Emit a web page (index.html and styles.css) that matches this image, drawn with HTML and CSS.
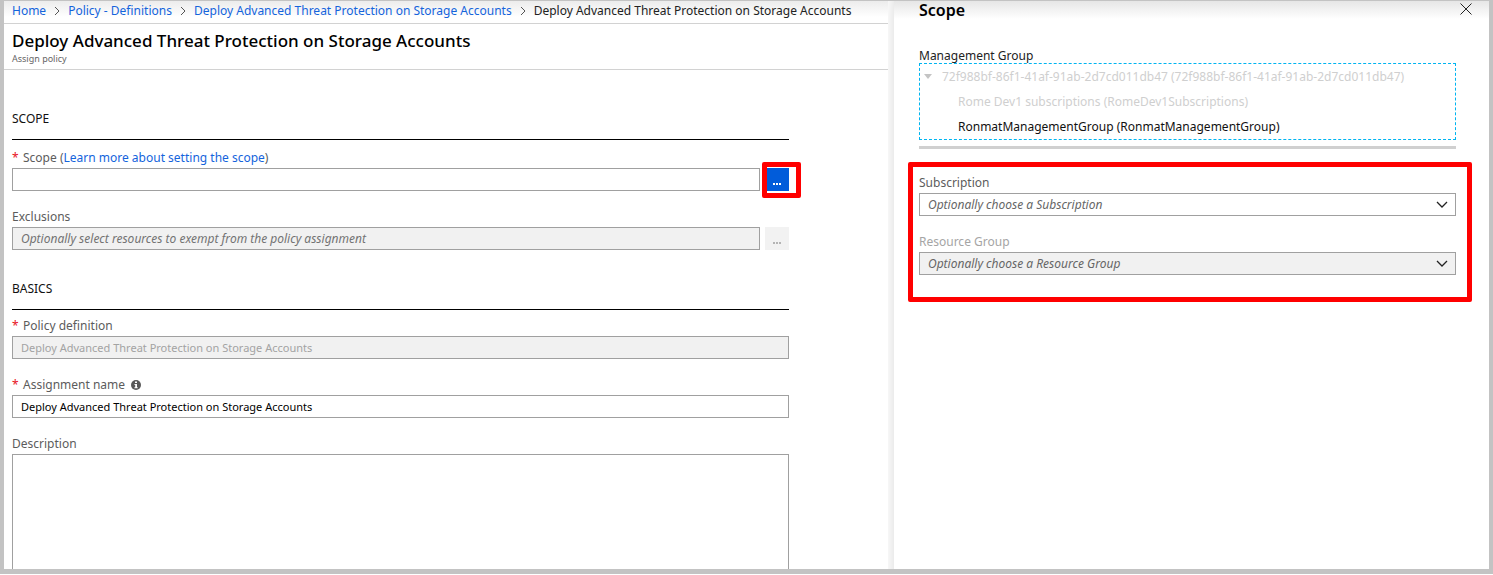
FILE: index.html
```html
<!DOCTYPE html>
<html lang="en">
<head>
<meta charset="utf-8">
<title>Deploy Advanced Threat Protection on Storage Accounts</title>
<link rel="stylesheet" href="styles.css">
</head>
<body>
<div class="frame">
  <main class="blade">
    <nav class="crumbs" aria-label="Breadcrumb">
      <a href="#">Home</a>
      <svg class="sep" viewBox="0 0 6 10"><path d="M1 1l4 4-4 4"/></svg>
      <a href="#">Policy - Definitions</a>
      <svg class="sep" viewBox="0 0 6 10"><path d="M1 1l4 4-4 4"/></svg>
      <a href="#">Deploy Advanced Threat Protection on Storage Accounts</a>
      <svg class="sep" viewBox="0 0 6 10"><path d="M1 1l4 4-4 4"/></svg>
      <span>Deploy Advanced Threat Protection on Storage Accounts</span>
    </nav>
    <header class="blade-header">
      <h1>Deploy Advanced Threat Protection on Storage Accounts</h1>
      <p>Assign policy</p>
    </header>
    <form class="form">
      <section class="section">
        <h2>SCOPE</h2>
        <div class="fields">
          <div class="field">
            <div class="label"><span class="req">*</span><label for="scope">Scope</label>&nbsp;(<a href="#">Learn more about setting the scope</a>)</div>
            <div class="picker">
              <input id="scope" class="box" type="text">
              <div class="marked">
                <button type="button" class="more primary" aria-label="Choose scope"><svg viewBox="0 0 8 2"><path d="M0 0h2v2H0zM3 0h2v2H3zM6 0h2v2H6z"/></svg></button>
                <span class="mark mark-button"></span>
              </div>
            </div>
          </div>
          <div class="field">
            <label class="label" for="exclusions">Exclusions</label>
            <div class="picker">
              <input id="exclusions" class="box" type="text" placeholder="Optionally select resources to exempt from the policy assignment" disabled>
              <button type="button" class="more" aria-label="Choose exclusions" disabled><svg viewBox="0 0 8 2"><path d="M0 0h2v2H0zM3 0h2v2H3zM6 0h2v2H6z"/></svg></button>
            </div>
          </div>
        </div>
      </section>
      <section class="section">
        <h2>BASICS</h2>
        <div class="fields compact">
          <div class="field">
            <label class="label" for="definition"><span class="req">*</span>Policy definition</label>
            <input id="definition" class="box" type="text" value="Deploy Advanced Threat Protection on Storage Accounts" disabled>
          </div>
          <div class="field">
            <label class="label" for="name"><span class="req">*</span>Assignment name
              <svg class="info" viewBox="0 0 10 10"><circle cx="5" cy="5" r="5"/><path d="M4 1.5h2v1.5H4zM3.5 4H6v3.2h.7v1H3.4v-1h.8V5h-.7z"/></svg>
            </label>
            <input id="name" class="box" type="text" value="Deploy Advanced Threat Protection on Storage Accounts">
          </div>
          <div class="field">
            <label class="label" for="description">Description</label>
            <textarea id="description" class="box area"></textarea>
          </div>
        </div>
      </section>
    </form>
  </main>
  <aside class="panel">
    <header class="panel-header">
      <h2>Scope</h2>
      <button type="button" class="close" aria-label="Close"><svg viewBox="0 0 12 12"><path d="M.5.5l11 11M11.5.5l-11 11"/></svg></button>
    </header>
    <div class="panel-body">
      <h3 id="groups">Management Group</h3>
      <ul class="tree" aria-labelledby="groups">
        <li class="root"><svg class="caret" viewBox="0 0 8 5"><path d="M0 0h8L4 5z"/></svg>72f988bf-86f1-41af-91ab-2d7cd011db47 (72f988bf-86f1-41af-91ab-2d7cd011db47)</li>
        <li class="child">Rome Dev1 subscriptions (RomeDev1Subscriptions)</li>
        <li class="child active">RonmatManagementGroup (RonmatManagementGroup)</li>
      </ul>
      <div class="fields choices">
        <div class="field">
          <label class="label" for="subscription">Subscription</label>
          <div class="drop">
            <select id="subscription" class="box"><option>Optionally choose a Subscription</option></select>
            <svg class="chevron" viewBox="0 0 12 7"><path d="M1 1l5 5 5-5"/></svg>
          </div>
        </div>
        <div class="field">
          <label class="label muted" for="group">Resource Group</label>
          <div class="drop">
            <select id="group" class="box" disabled><option>Optionally choose a Resource Group</option></select>
            <svg class="chevron" viewBox="0 0 12 7"><path d="M1 1l5 5 5-5"/></svg>
          </div>
        </div>
        <span class="mark mark-choices"></span>
      </div>
    </div>
  </aside>
</div>
</body>
</html>
```
FILE: styles.css
```css
* { box-sizing: border-box; }
html, body { height: 100%; }
body {
  margin: 0;
  padding-bottom: 1px;
  overflow: hidden;
  background: #fff;
  color: #222;
  font-family: "Noto Sans", "Open Sans", sans-serif;
  font-size: 12px;
}
h1, h2, h3, p, ul { margin: 0; padding: 0; }
ul { list-style: none; }
a { color: #1464dc; text-decoration: none; }
button { padding: 0; border: 0; font: inherit; }
svg { display: block; flex: none; }

.frame {
  display: grid;
  grid-template-columns: minmax(0, 1fr) minmax(0, 601px);
  height: 100%;
  overflow: hidden;
  border: solid #c3c3c3;
  border-width: 1px 4px 5px;
}
.blade { min-width: 0; overflow: hidden; }

.crumbs {
  display: flex;
  align-items: center;
  gap: 8px;
  height: 23px;
  padding: 0 8px 3px;
  border-bottom: 1px solid #d2d2d2;
  background: linear-gradient(#ececec, #fff 16px);
  font-size: 12px;
  white-space: nowrap;
}
.sep { width: 6px; height: 10px; fill: none; stroke: #555; }

.blade-header {
  height: 46px;
  padding: 5px 8px 0;
  border-bottom: 1px solid #d2d2d2;
}
.blade-header h1 { color: #000; font-size: 17px; font-weight: 500; line-height: 24px; }
.blade-header p { color: #666; font-size: 9px; line-height: 12px; }

.form { max-width: 785px; padding: 10px 0 0 8px; }
.section { padding-top: 29px; }
.section h2 {
  padding-bottom: 10px;
  border-bottom: 1px solid #000;
  color: #111;
  font-size: 12px;
  font-weight: 400;
  line-height: 20px;
}
.fields { display: grid; gap: 14px; padding-top: 6px; }
.compact { padding-top: 4px; }
.field { min-width: 0; }
.label {
  display: flex;
  align-items: center;
  height: 22px;
  color: #5c5c5c;
  font-size: 12px;
  white-space: nowrap;
}
.muted { color: #a5a5a5; }
.req { width: 11px; color: #e81123; }
.info { width: 10px; height: 10px; margin: 2px 0 0 6px; fill: #595959; }
.info path { fill: #fff; }

.box {
  display: block;
  width: 100%;
  height: 23px;
  margin: 0;
  padding: 0 8px;
  border: 1px solid #a0a0a0;
  border-radius: 0;
  outline: 0;
  background: #fff;
  color: #000;
  font-family: inherit;
  font-size: 11px;
}
.box:disabled { background: #f1f1f1; color: #a3a3a3; opacity: 1; }
.box:placeholder-shown { font-size: 12px; }
.box::placeholder { color: #737373; font-style: italic; opacity: 1; }
.area { height: 140px; resize: none; }

.picker { display: grid; grid-template-columns: minmax(0, 1fr) 24px; gap: 5px; }
.marked { position: relative; }
.more {
  display: flex;
  align-items: flex-end;
  justify-content: center;
  width: 24px;
  height: 23px;
  padding-bottom: 6px;
  background: #f2f2f2;
}
.more svg { width: 8px; height: 2px; fill: #b4b4b4; }
.primary { background: #015cda; }
.primary svg { fill: #fff; }
.mark {
  position: absolute;
  border: 5px solid #f00;
  border-radius: 2px;
  pointer-events: none;
}
.mark-button { inset: -6px -12px -7px -3px; }
.mark-choices { inset: 13px -16px -27px -11px; }

.panel {
  display: grid;
  grid-template-columns: 6px minmax(0, 1fr);
  grid-template-rows: auto 1fr;
  min-width: 0;
  background: linear-gradient(90deg, #f7f7f7, #ebebeb) 0 0 / 6px 100% no-repeat;
}
.panel > * { grid-column: 2; }
.panel-header {
  display: flex;
  justify-content: space-between;
  align-items: flex-start;
  height: 47px;
  padding: 0 17px 0 25px;
  background: linear-gradient(#e6e6e6, #fff 18px);
}
.panel-header h2 { color: #000; font-size: 16px; font-weight: 600; line-height: 18px; }
.close { margin-top: 2px; background: none; }
.close svg { width: 12px; height: 12px; fill: none; stroke: #222; }
.panel-body { padding: 0 33px 0 25px; }
.panel-body h3 { color: #222; font-size: 12px; font-weight: 400; line-height: 15px; }
.tree {
  border: 1px dashed #00b4f0;
  color: #cfcfcf;
  line-height: 25px;
  white-space: nowrap;
  overflow: hidden;
}
.root { display: flex; align-items: center; gap: 10px; padding-left: 4px; }
.caret { width: 8px; height: 5px; fill: #c4c4c4; }
.child { padding-left: 38px; }
.active { color: #111; }
.choices {
  position: relative;
  margin-top: 6px;
  padding-top: 22px;
  border-top: 3px solid #d0d0d0;
}
.drop { display: grid; align-items: center; }
.drop > * { grid-area: 1 / 1; }
.drop select { appearance: none; color: #666; font-size: 12px; font-style: italic; }
.drop select:disabled { color: #666; }
.chevron {
  justify-self: end;
  width: 12px;
  height: 7px;
  margin-right: 8px;
  fill: none;
  stroke: #222;
  stroke-width: 1.3;
  pointer-events: none;
}
```
